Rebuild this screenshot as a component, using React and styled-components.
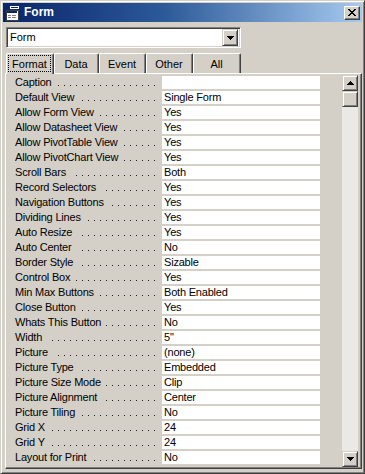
import React from "react";
import styled, { createGlobalStyle } from "styled-components";

const Global = createGlobalStyle`
  html, body { margin: 0; padding: 0; background: #d4d0c8; }
  body {
    width: 365px; height: 474px; overflow: hidden;
    font-family: "Liberation Sans", Tahoma, Arial, sans-serif;
    font-size: 11px; color: #000;
  }
  * { box-sizing: border-box; }
`;

const Window = styled.div`
  width: 365px;
  height: 474px;
  background: #d4d0c8;
  border: 1px solid;
  border-color: #d4d0c8 #404040 #404040 #d4d0c8;
  box-shadow: inset 1px 1px 0 #fff, inset -1px -1px 0 #808080;
  padding: 2px;
  display: flex;
  flex-direction: column;
`;

const TitleBar = styled.div`
  flex: none;
  height: 19px;
  background: linear-gradient(to right, #0a246a 0%, #2c5a98 45%, #a6caf0 100%);
  display: flex;
  align-items: center;
  padding: 0 2px 0 2px;
  gap: 3px;
  color: #fff;
  font-weight: bold;
  font-size: 12px;
`;

const TitleText = styled.span`
  flex: 1;
  line-height: 19px;
`;

const CloseButton = styled.div`
  width: 16px;
  height: 14px;
  background: #d4d0c8;
  border: 1px solid;
  border-color: #fff #404040 #404040 #fff;
  box-shadow: inset -1px -1px 0 #808080;
  display: flex;
  align-items: center;
  justify-content: center;
`;

const Body = styled.div`
  flex: 1;
  display: flex;
  flex-direction: column;
  padding: 5px 0 2px 0;
  min-height: 0;
`;

const Combo = styled.div`
  flex: none;
  margin-left: 3px;
  width: 235px;
  height: 21px;
  background: #fff;
  border: 1px solid;
  border-color: #808080 #fff #fff #808080;
  box-shadow: inset 1px 1px 0 #404040, inset -1px -1px 0 #d4d0c8;
  display: flex;
  align-items: center;
  padding: 2px;
`;

const ComboText = styled.span`
  flex: 1;
  padding-left: 1px;
  line-height: 17px;
`;

const ArrowButton = styled.div`
  flex: none;
  width: 16px;
  height: ${(p) => p.$h || 16}px;
  background: #d4d0c8;
  border: 1px solid;
  border-color: #d4d0c8 #404040 #404040 #d4d0c8;
  box-shadow: inset 1px 1px 0 #fff, inset -1px -1px 0 #808080;
  display: flex;
  align-items: center;
  justify-content: center;
`;

const TabStrip = styled.div`
  flex: none;
  height: 22px;
  margin-top: 3px;
  padding-left: 3px;
  display: flex;
  align-items: flex-end;
`;

const Tab = styled.div`
  position: relative;
  z-index: ${(p) => (p.$active ? 2 : 1)};
  width: ${(p) => p.$w}px;
  height: ${(p) => (p.$active ? 21 : 20)}px;
  margin-bottom: ${(p) => (p.$active ? -1 : 0)}px;
  background: #d4d0c8;
  border-top: 1px solid #fff;
  border-left: 1px solid #fff;
  border-right: 1px solid #404040;
  border-radius: 2px 2px 0 0;
  box-shadow: inset -1px 0 0 #808080;
  display: flex;
  padding: 1px 2px 2px 1px;
`;

const TabLabel = styled.span`
  flex: 1;
  display: flex;
  align-items: center;
  justify-content: center;
  outline: ${(p) => (p.$focus ? "1px dotted #000" : "none")};
  outline-offset: -1px;
  padding-top: 1px;
`;

const Panel = styled.div`
  flex: 1;
  min-height: 0;
  margin-left: 2px;
  border: 1px solid;
  border-color: #fff #404040 #404040 #fff;
  box-shadow: inset -1px -1px 0 #808080;
  padding: 1px 3px 1px 1px;
  display: flex;
`;

const PropGrid = styled.div`
  flex: 1;
  display: grid;
  grid-template-columns: 155px 158px;
  grid-auto-rows: 13px;
  row-gap: 2px;
  align-content: start;
  padding-top: 1px;
  letter-spacing: -0.2px;
`;

const LabelCell = styled.div`
  padding: 0 5px 0 8px;
  line-height: 13px;
  white-space: nowrap;
  overflow: hidden;
  background-image: linear-gradient(to right, #222 1px, transparent 1px);
  background-size: 6px 1px;
  background-repeat: repeat-x;
  background-origin: content-box;
  background-clip: content-box;
  background-position: 1px 9px;
`;

const LabelText = styled.span`
  display: inline-block;
  background: #d4d0c8;
  padding-right: 5px;
`;

const ValueCell = styled.div`
  background: #fff;
  padding-left: 2px;
  line-height: 13px;
  white-space: nowrap;
  overflow: hidden;
`;

const ScrollBar = styled.div`
  flex: none;
  width: 16px;
  display: flex;
  flex-direction: column;
`;

const Track = styled.div`
  flex: 1;
  background: #ebe9e5;
`;

const Thumb = styled.div`
  flex: none;
  height: 16px;
  background: #d4d0c8;
  border: 1px solid;
  border-color: #d4d0c8 #404040 #404040 #d4d0c8;
  box-shadow: inset 1px 1px 0 #fff, inset -1px -1px 0 #808080;
`;

const props = [
  ["Caption", ""],
  ["Default View", "Single Form"],
  ["Allow Form View", "Yes"],
  ["Allow Datasheet View", "Yes"],
  ["Allow PivotTable View", "Yes"],
  ["Allow PivotChart View", "Yes"],
  ["Scroll Bars", "Both"],
  ["Record Selectors", "Yes"],
  ["Navigation Buttons", "Yes"],
  ["Dividing Lines", "Yes"],
  ["Auto Resize", "Yes"],
  ["Auto Center", "No"],
  ["Border Style", "Sizable"],
  ["Control Box", "Yes"],
  ["Min Max Buttons", "Both Enabled"],
  ["Close Button", "Yes"],
  ["Whats This Button", "No"],
  ["Width", "5\""],
  ["Picture", "(none)"],
  ["Picture Type", "Embedded"],
  ["Picture Size Mode", "Clip"],
  ["Picture Alignment", "Center"],
  ["Picture Tiling", "No"],
  ["Grid X", "24"],
  ["Grid Y", "24"],
  ["Layout for Print", "No"],
];

const tabs = [
  ["Format", 48],
  ["Data", 45],
  ["Event", 47],
  ["Other", 47],
  ["All", 48],
];

const DownArrow = () => (
  <svg width="7" height="4" viewBox="0 0 7 4" shapeRendering="crispEdges">
    <path d="M0 0h7v1h-1v1h-1v1h-1v1h-1v-1h-1v-1h-1v-1h-1z" fill="#000" />
  </svg>
);

const UpArrow = () => (
  <svg width="7" height="4" viewBox="0 0 7 4" shapeRendering="crispEdges">
    <path d="M3 0h1v1h1v1h1v1h1v1h-7v-1h1v-1h1v-1h1z" fill="#000" />
  </svg>
);

const FormIcon = () => (
  <svg width="16" height="16" viewBox="0 0 16 16" shapeRendering="crispEdges">
    <path d="M5 1h9v3H5z" fill="#fff" />
    <path d="M6 2h7v1H6z" fill="#0a246a" />
    <path d="M1 5h12v10H1z" fill="#fff" stroke="#404040" strokeWidth="1" />
    <path d="M2 6h10v2H2z" fill="#0a246a" />
    <path d="M3 10h3v1H3zM7 10h4v1H7zM3 12h3v1H3zM7 12h4v1H7z" fill="#808080" />
  </svg>
);

const CloseGlyph = () => (
  <svg width="8" height="7" viewBox="0 0 8 7" shapeRendering="crispEdges">
    <path
      d="M0 0h2v1h1v1h2v-1h1v-1h2v1h-1v1h-1v1h-1v1h1v1h1v1h1v1h-2v-1h-1v-1h-2v1h-1v1h-2v-1h1v-1h1v-1h1v-1h-1v-1h-1v-1h-1z"
      fill="#000"
    />
  </svg>
);

export default function App() {
  return (
    <>
      <Global />
      <Window>
        <TitleBar>
          <FormIcon />
          <TitleText>Form</TitleText>
          <CloseButton>
            <CloseGlyph />
          </CloseButton>
        </TitleBar>
        <Body>
          <Combo>
            <ComboText>Form</ComboText>
            <ArrowButton $h={17}>
              <DownArrow />
            </ArrowButton>
          </Combo>
          <TabStrip>
            {tabs.map(([name, w], i) => (
              <Tab key={name} $w={w} $active={i === 0}>
                <TabLabel $focus={i === 0}>{name}</TabLabel>
              </Tab>
            ))}
          </TabStrip>
          <Panel>
            <PropGrid>
              {props.map(([label, value]) => (
                <React.Fragment key={label}>
                  <LabelCell>
                    <LabelText>{label}</LabelText>
                  </LabelCell>
                  <ValueCell>{value}</ValueCell>
                </React.Fragment>
              ))}
            </PropGrid>
            <ScrollBar>
              <ArrowButton>
                <UpArrow />
              </ArrowButton>
              <Thumb />
              <Track />
              <ArrowButton>
                <DownArrow />
              </ArrowButton>
            </ScrollBar>
          </Panel>
        </Body>
      </Window>
    </>
  );
}
